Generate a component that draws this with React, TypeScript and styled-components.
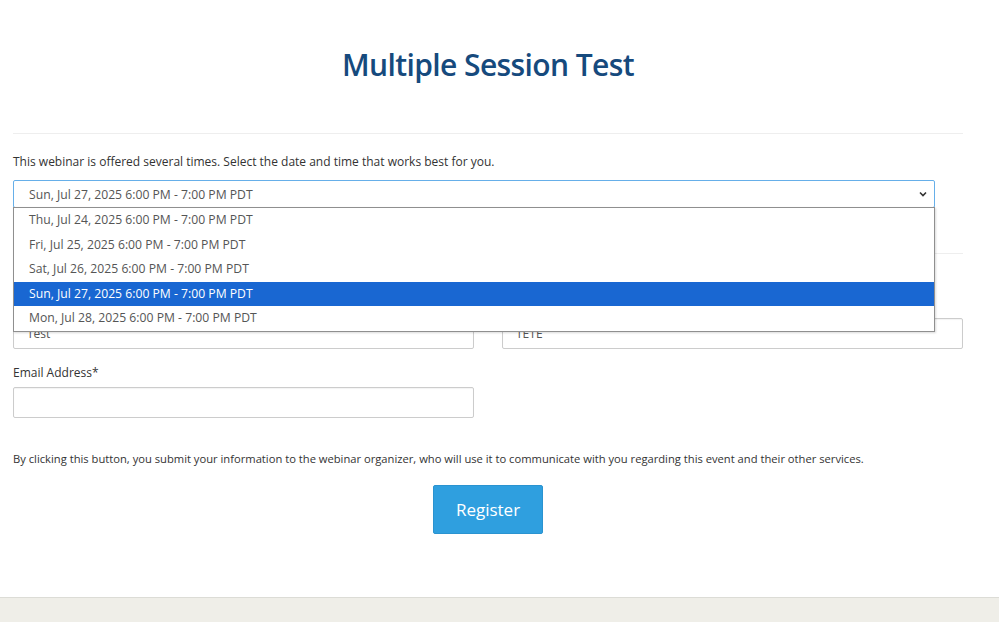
import styled, { createGlobalStyle } from "styled-components";

const GlobalStyle = createGlobalStyle`
  html, body {
    margin: 0;
    padding: 0;
    background: #fff;
  }
  body {
    font-family: "Open Sans", "Noto Sans", sans-serif;
    color: #333;
  }
`;

const Page = styled.div`
  display: flex;
  flex-direction: column;
  min-height: 622px;
`;

const Main = styled.main`
  width: 950px;
  margin-left: 13px;
  flex: 1;
`;

const Title = styled.h1`
  margin: 0;
  padding-top: 44px;
  height: 42px;
  line-height: 42px;
  text-align: center;
  font-size: 30px;
  font-weight: 600;
  color: #164a7d;
  letter-spacing: -0.6px;
`;

const Rule = styled.hr<{ $top: number }>`
  border: 0;
  border-top: 1px solid #eeeeee;
  margin: ${(p) => p.$top}px 0 0;
`;

const Intro = styled.p`
  margin: 19px 0 0;
  font-size: 12px;
  line-height: 18px;
`;

const SelectWrap = styled.div`
  position: relative;
  width: 922px;
  margin-top: 9px;
`;

const SelectBox = styled.div`
  box-sizing: border-box;
  height: 28px;
  border: 1px solid #66afe9;
  border-radius: 2px;
  display: flex;
  align-items: center;
  justify-content: space-between;
  padding: 0 6px 0 15px;
  font-size: 12.2px;
  color: #555;
`;

const OptionList = styled.ul`
  position: absolute;
  top: 27px;
  left: 0;
  right: 0;
  margin: 0;
  padding: 0;
  list-style: none;
  background: #fff;
  border: 1px solid #8f8f8f;
  box-shadow: 1px 1px 2px rgba(0, 0, 0, 0.15);
  z-index: 5;
`;

const OptionItem = styled.li<{ $active?: boolean }>`
  height: 24.6px;
  line-height: 24.6px;
  padding-left: 15px;
  font-size: 12.2px;
  color: ${(p) => (p.$active ? "#fff" : "#555")};
  background: ${(p) => (p.$active ? "#1967d2" : "transparent")};
`;

const FieldRow = styled.div`
  display: flex;
  gap: 28px;
  margin-top: 41px;
`;

const Field = styled.div`
  width: 461px;
  display: flex;
  flex-direction: column;
`;

const Label = styled.label`
  font-size: 12px;
  line-height: 18px;
  height: 18px;
  margin-bottom: 5px;
`;

const Input = styled.div`
  box-sizing: border-box;
  height: 31px;
  border: 1px solid #ccc;
  border-radius: 2px;
  box-shadow: inset 0 1px 1px rgba(0, 0, 0, 0.05);
  padding: 0 13px;
  display: flex;
  align-items: center;
  font-size: 12px;
  color: #555;
`;

const EmailRow = styled(FieldRow)`
  margin-top: 15px;
`;

const Disclaimer = styled.p`
  margin: 32px 0 0;
  font-size: 11.2px;
  line-height: 18px;
`;

const ButtonRow = styled.div`
  display: flex;
  justify-content: center;
  margin-top: 17px;
`;

const Button = styled.button`
  width: 110px;
  height: 49px;
  border: 1px solid #2a93d0;
  border-radius: 2px;
  background: #2f9fdf;
  color: #fff;
  font-family: "Open Sans", "Noto Sans", sans-serif;
  font-size: 17px;
  cursor: pointer;
`;

const Footer = styled.footer`
  height: 24px;
  margin-top: 63px;
  background: #efeee8;
  border-top: 1px solid #dcdcd6;
`;

const sessions = [
  "Thu, Jul 24, 2025 6:00 PM - 7:00 PM PDT",
  "Fri, Jul 25, 2025 6:00 PM - 7:00 PM PDT",
  "Sat, Jul 26, 2025 6:00 PM - 7:00 PM PDT",
  "Sun, Jul 27, 2025 6:00 PM - 7:00 PM PDT",
  "Mon, Jul 28, 2025 6:00 PM - 7:00 PM PDT",
];

const Chevron = () => (
  <svg width="10" height="10" viewBox="0 0 10 10">
    <path d="M2 3.5 L5 6.5 L8 3.5" fill="none" stroke="#333" strokeWidth="1.6" />
  </svg>
);

const App = () => {
  const selected = 3;
  return (
    <Page>
      <GlobalStyle />
      <Main>
        <Title>Multiple Session Test</Title>
        <Rule $top={47} />
        <Intro>This webinar is offered several times. Select the date and time that works best for you.</Intro>
        <SelectWrap>
          <SelectBox>
            <span>{sessions[selected]}</span>
            <Chevron />
          </SelectBox>
          <OptionList>
            {sessions.map((s, i) => (
              <OptionItem key={s} $active={i === selected}>
                {s}
              </OptionItem>
            ))}
          </OptionList>
        </SelectWrap>
        <Rule $top={45} />
        <FieldRow>
          <Field>
            <Label>First Name*</Label>
            <Input>Test</Input>
          </Field>
          <Field>
            <Label>Last Name*</Label>
            <Input>TETE</Input>
          </Field>
        </FieldRow>
        <EmailRow>
          <Field>
            <Label>Email Address*</Label>
            <Input />
          </Field>
        </EmailRow>
        <Disclaimer>
          By clicking this button, you submit your information to the webinar organizer, who will use it to
          communicate with you regarding this event and their other services.
        </Disclaimer>
        <ButtonRow>
          <Button>Register</Button>
        </ButtonRow>
      </Main>
      <Footer />
    </Page>
  );
};

export default App;
